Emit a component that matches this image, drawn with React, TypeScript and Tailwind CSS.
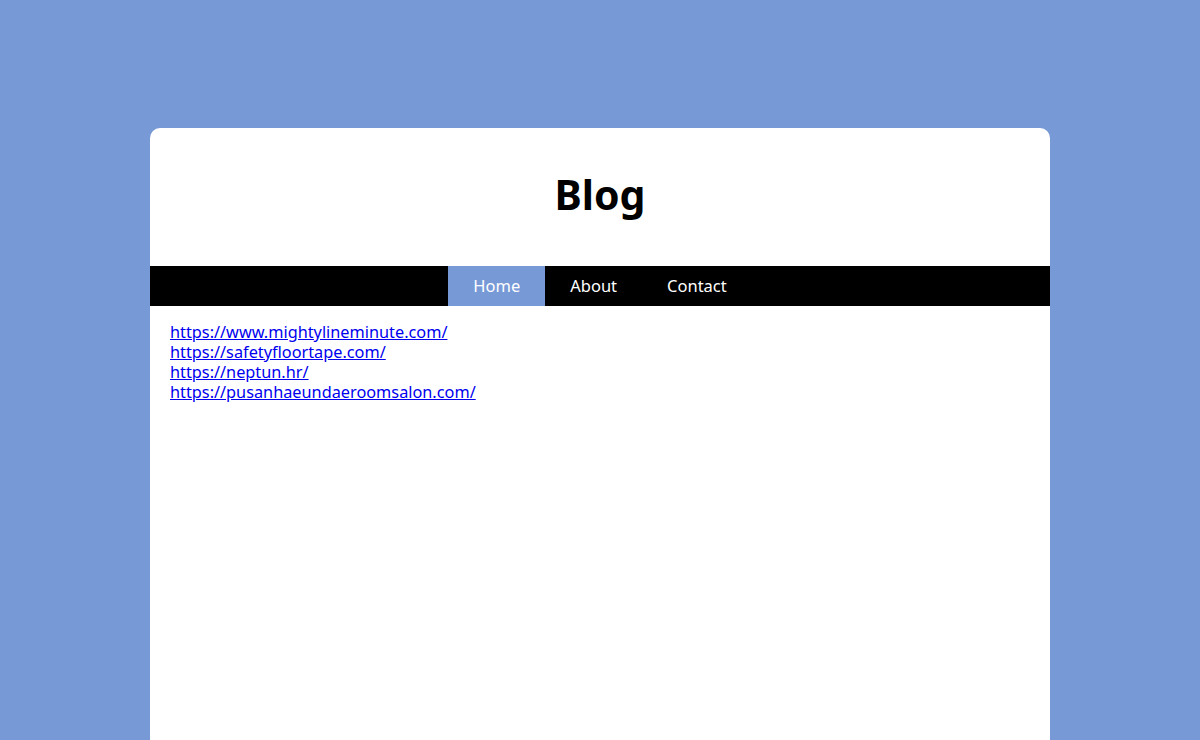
export default function App() {
  const links = [
    "https://www.mightylineminute.com/",
    "https://safetyfloortape.com/",
    "https://neptun.hr/",
    "https://pusanhaeundaeroomsalon.com/",
  ];
  return (
    <div className="min-h-[740px] bg-[#7799d6] pt-[128px]" style={{ fontFamily: '"Noto Sans", "Open Sans", sans-serif' }}>
      <div className="mx-auto w-[900px] min-h-[612px] rounded-t-[10px] bg-white">
        <div className="flex h-[138px] items-center justify-center pb-[6px]">
          <h1 className="text-[41px] font-bold text-black leading-none">Blog</h1>
        </div>
        <nav className="flex h-[40px] justify-center bg-black">
          <a className="flex items-center bg-[#7799d6] px-[25px] text-[16.5px] text-white">Home</a>
          <a className="flex items-center px-[25px] text-[16.5px] text-white">About</a>
          <a className="flex items-center px-[25px] text-[16.5px] text-white">Contact</a>
        </nav>
        <div className="px-[20px] pt-[16px] text-[16.3px] leading-[20px]">
          {links.map((l) => (
            <div key={l}>
              <a href="#" className="text-[#0000ee] underline">{l}</a>
            </div>
          ))}
        </div>
      </div>
    </div>
  );
}
